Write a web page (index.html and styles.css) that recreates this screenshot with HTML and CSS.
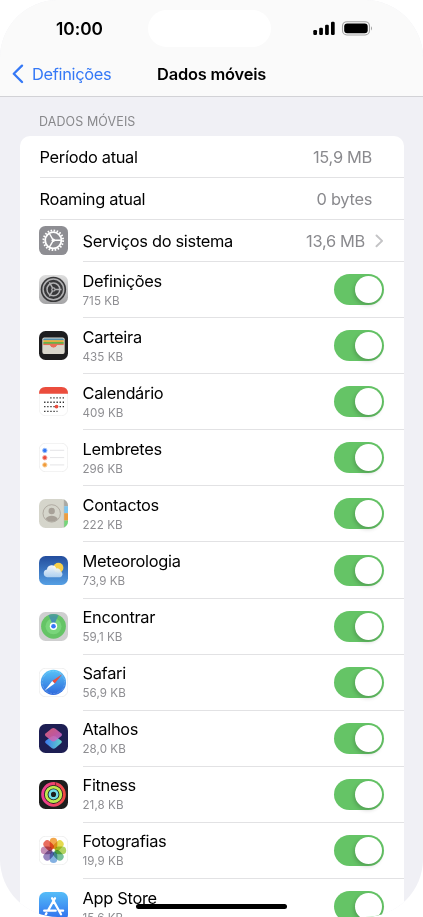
FILE: index.html
```html
<!DOCTYPE html>
<html lang="pt">
<head>
<meta charset="utf-8">
<title>Dados móveis</title>
<link rel="stylesheet" href="styles.css">
</head>
<body>
<div class="screen">
  <header class="header">
    <div class="status">
      <span class="time">10:00</span>
      <span class="island"></span>
      <svg class="indicators" width="61" height="16" viewBox="0 0 61 16">
        <rect x="0.3" y="9" width="3.7" height="5" rx="1.2"/><rect x="6.2" y="6.7" width="3.7" height="7.3" rx="1.2"/><rect x="12.1" y="3.7" width="3.7" height="10.3" rx="1.2"/><rect x="18" y="0.7" width="3.7" height="13.3" rx="1.2"/>
        <rect x="29.5" y="0.7" width="27" height="13.3" rx="4.4" fill="none" stroke="#a5a5a5" stroke-width="1.1"/>
        <rect x="31.2" y="2.4" width="23.5" height="9.9" rx="3"/>
        <path d="M58 5.2Q60 7.3 58 9.5Z" fill="#a0a0a0"/>
      </svg>
    </div>
    <nav class="nav">
      <a class="back"><svg width="12" height="20" viewBox="0 0 12 20"><path d="M10 1.6 1.8 9.8 10 18" fill="none" stroke="#3478f6" stroke-width="2.3" stroke-linecap="round" stroke-linejoin="round"/></svg><span>Definições</span></a>
      <h1>Dados móveis</h1>
    </nav>
  </header>
  <h2>DADOS MÓVEIS</h2>
  <main class="card">
    <div class="row plain"><span class="name">Período atual</span><span class="value">15,9 MB</span></div>
    <div class="row plain"><span class="name">Roaming atual</span><span class="value">0 bytes</span></div>
    <div class="row system">
      <svg class="icon" viewBox="0 0 29 29"><rect width="29" height="29" rx="6.3" fill="#8e8e93"/><g fill="none" stroke="#fff"><circle cx="14.3" cy="14.3" r="9.8" stroke-width="2" stroke-dasharray="1.6 1.479"/><circle cx="14.3" cy="14.3" r="8.1" stroke-width="1.8"/><path d="M14.3 14.3h7.5M14.3 14.3 10.4 7.5M14.3 14.3 10.4 21.1" stroke-width="1.4"/></g><circle cx="14.3" cy="14.3" r="1.7" fill="#fff"/></svg>
      <div class="line"><span class="name">Serviços do sistema</span><span class="value">13,6 MB</span><svg class="chevron" width="9" height="14" viewBox="0 0 9 14"><path d="m1.5 1.5 5.6 5.4-5.6 5.4" fill="none" stroke="#c4c4c6" stroke-width="2" stroke-linecap="round" stroke-linejoin="round"/></svg></div>
    </div>
    <div class="row app">
      <svg class="icon" viewBox="0 0 29 29"><defs><linearGradient id="silver" x2="0" y2="1"><stop stop-color="#dedede"/><stop offset="1" stop-color="#a4a4a6"/></linearGradient></defs><rect width="29" height="29" rx="6.5" fill="url(#silver)"/><circle cx="14.4" cy="14.4" r="12.7" fill="#38383a"/><g fill="none" stroke="#b1b1b3"><circle cx="14.4" cy="14.4" r="10.3" stroke-width="1.5"/><circle cx="14.4" cy="14.4" r="6.4" stroke-width="1.5"/><path d="M14.4 14.4h8.1M14.4 14.4 10.4 7.4M14.4 14.4 10.4 21.4" stroke-width="1.5"/></g><circle cx="14.4" cy="14.4" r="2.2" fill="#b1b1b3"/><circle cx="14.4" cy="14.4" r="1" fill="#38383a"/></svg>
      <div class="line"><div class="info"><span class="name">Definições</span><small>715 KB</small></div><span class="toggle"></span></div>
    </div>
    <div class="row app">
      <svg class="icon" viewBox="0 0 29 29"><rect width="29" height="29" rx="6.5" fill="#1d1d1f"/><rect x="3.3" y="6.6" width="22.4" height="16.3" rx="2" fill="#d9d6cc"/><path d="M4.3 8.4q0-1 1-1h18.4q1 0 1 1v1H4.3z" fill="#528fad"/><path d="M4.3 9.2h20.4v2H4.3z" fill="#e5ae3e"/><path d="M4.3 11h20.4v2H4.3z" fill="#65b348"/><path d="M4.3 12.8h20.4v1.4h-6.5q-1.2 2.7-3.7 2.7t-3.7-2.7H4.3z" fill="#e96e57"/><path d="M4 14.2h6.8q1.2 2.5 3.7 2.5t3.7-2.5H25v7.2q0 1-1 1H5q-1 0-1-1z" fill="#d9d6cc"/></svg>
      <div class="line"><div class="info"><span class="name">Carteira</span><small>435 KB</small></div><span class="toggle"></span></div>
    </div>
    <div class="row app">
      <svg class="icon" viewBox="0 0 29 29"><rect x=".25" y=".25" width="28.5" height="28.5" rx="6.3" fill="#fff" stroke="#e5e5e5" stroke-width=".5"/><path d="M0 6.8Q0 0 6.5 0h16Q29 0 29 6.8z" fill="#eb4d3d"/><g stroke="#303030" stroke-width="1.35" stroke-dasharray="1.35 1.75"><path d="M11.2 10.9H25M5.1 15.2H25M5.1 19.6H25M5.1 24.3H18.5"/></g><circle cx="17.5" cy="19.6" r="1.9" fill="#eb4d3d"/></svg>
      <div class="line"><div class="info"><span class="name">Calendário</span><small>409 KB</small></div><span class="toggle"></span></div>
    </div>
    <div class="row app">
      <svg class="icon" viewBox="0 0 29 29"><rect x=".25" y=".25" width="28.5" height="28.5" rx="6.3" fill="#fff" stroke="#dedede" stroke-width=".5"/><path d="M11 7.3h14.2M11 14.6h14.2M11 21.9h14.2" stroke="#dddde0" stroke-width=".8"/><g stroke-width="1"><circle cx="5.8" cy="7.5" r="2.2" fill="#3478f6" stroke="#9cc0fa"/><circle cx="5.8" cy="14.7" r="2.2" fill="#eb4d3d" stroke="#f6aaa3"/><circle cx="5.8" cy="21.9" r="2.2" fill="#f19a37" stroke="#f9d09d"/></g></svg>
      <div class="line"><div class="info"><span class="name">Lembretes</span><small>296 KB</small></div><span class="toggle"></span></div>
    </div>
    <div class="row app">
      <svg class="icon" viewBox="0 0 29 29"><defs><clipPath id="tile"><rect width="29" height="29" rx="6.5"/></clipPath></defs><g clip-path="url(#tile)"><path d="M0 0h29v29H0z" fill="#d5d5cb"/><path d="M25 0h4v7.3h-4z" fill="#aaa9a3"/><path d="M25 7.3h4v7h-4z" fill="#7cc5f0"/><path d="M25 14.3h4v7.2h-4z" fill="#ed9d3f"/><path d="M25 21.5h4V29h-4z" fill="#75d67a"/><path d="M25 0v29" stroke="#b8b8b0" stroke-width=".5"/></g><circle cx="12.7" cy="14.4" r="8.7" fill="#d5d5cb" stroke="#a7a198" stroke-width=".8"/><circle cx="12.7" cy="12" r="3.2" fill="#a7a198"/><path d="M6.5 20q2.2-3.2 6.2-3.2t6.2 3.2q-2.6 2.8-6.2 2.8T6.5 20z" fill="#a7a198"/></svg>
      <div class="line"><div class="info"><span class="name">Contactos</span><small>222 KB</small></div><span class="toggle"></span></div>
    </div>
    <div class="row app">
      <svg class="icon" viewBox="0 0 29 29"><defs><linearGradient id="sky" x2="0" y2="1"><stop stop-color="#234d9d"/><stop offset="1" stop-color="#559fe4"/></linearGradient><linearGradient id="cloud" x2="0" y2="1"><stop stop-color="#fff"/><stop offset="1" stop-color="#b5d4f1"/></linearGradient></defs><rect width="29" height="29" rx="6.5" fill="url(#sky)"/><circle cx="19.4" cy="11.8" r="5" fill="#f8cf48"/><path d="M8.2 21.2a3.9 3.9 0 0 1-.3-7.7 4.9 4.9 0 0 1 9.4-1.1 3.8 3.8 0 0 1 4.5 3.2 3 3 0 0 1-.5 5.6z" fill="url(#cloud)" opacity=".94"/></svg>
      <div class="line"><div class="info"><span class="name">Meteorologia</span><small>73,9 KB</small></div><span class="toggle"></span></div>
    </div>
    <div class="row app">
      <svg class="icon" viewBox="0 0 29 29"><defs><linearGradient id="beam" x2="0" y2="1"><stop stop-color="#4595a5" stop-opacity=".7"/><stop offset="1" stop-color="#3478c6"/></linearGradient></defs><rect width="29" height="29" rx="6.5" fill="#cfcfd0"/><circle cx="14.5" cy="14.3" r="12.4" fill="#65c466"/><circle cx="14.5" cy="14.3" r="8" fill="#79d57b"/><path d="M14.5 14.3 9.4 3.1Q14.5.8 19.6 3.1z" fill="url(#beam)"/><circle cx="14.5" cy="14.3" r="3.7" fill="#fff"/><circle cx="14.5" cy="14.3" r="2.3" fill="#3478f6"/></svg>
      <div class="line"><div class="info"><span class="name">Encontrar</span><small>59,1 KB</small></div><span class="toggle"></span></div>
    </div>
    <div class="row app">
      <svg class="icon" viewBox="0 0 29 29"><defs><linearGradient id="compass" x2="0" y2="1"><stop stop-color="#58c4f7"/><stop offset="1" stop-color="#2d67dc"/></linearGradient></defs><rect x=".25" y=".25" width="28.5" height="28.5" rx="6.3" fill="#fff" stroke="#dedede" stroke-width=".5"/><circle cx="14.4" cy="14.4" r="12.6" fill="url(#compass)"/><circle cx="14.4" cy="14.4" r="11.2" fill="none" stroke="#d5eaff" stroke-opacity=".5" stroke-width="1.2" stroke-dasharray=".4 1.06"/><path d="M23.2 6.2 13.2 13 15.7 15.6z" fill="#eb4d3d"/><path d="M5.6 22.7 13.2 13 15.7 15.6z" fill="#fff"/></svg>
      <div class="line"><div class="info"><span class="name">Safari</span><small>56,9 KB</small></div><span class="toggle"></span></div>
    </div>
    <div class="row app">
      <svg class="icon" viewBox="0 0 29 29"><defs><linearGradient id="pink" x2="1" y2="1"><stop stop-color="#e76577"/><stop offset=".5" stop-color="#d65fa5"/><stop offset="1" stop-color="#b66dde"/></linearGradient><linearGradient id="blue"><stop stop-color="#3d79ee"/><stop offset="1" stop-color="#62d5c9"/></linearGradient></defs><rect width="29" height="29" rx="6.5" fill="#1d1e53"/><path d="M6.5 18.9q-1-1.1.2-2.1l5.8-4.2q2-1.4 4 0l5.8 4.2q1.2 1 0 2.1l-5.8 5q-1.9 1.5-3.8 0z" fill="url(#blue)"/><path d="M6.5 12.1q-1.3-1.3 0-2.5l5.9-4.8q2-1.4 4 0l6 4.8q1.3 1.2 0 2.5l-6 4.6q-2 1.5-4 0z" fill="url(#pink)" opacity=".88"/></svg>
      <div class="line"><div class="info"><span class="name">Atalhos</span><small>28,0 KB</small></div><span class="toggle"></span></div>
    </div>
    <div class="row app">
      <svg class="icon" viewBox="0 0 29 29"><defs><linearGradient id="move" x2="1"><stop stop-color="#ed3d96"/><stop offset="1" stop-color="#f14b42"/></linearGradient></defs><rect width="29" height="29" rx="6.5" fill="#1d1d1d"/><g fill="none" stroke-width="2.8"><circle cx="14.5" cy="14.4" r="10.9" stroke="url(#move)"/><circle cx="14.5" cy="14.4" r="7.3" stroke="#bde84d"/><circle cx="14.5" cy="14.4" r="3.8" stroke="#72dce7" stroke-width="2.5"/></g><path d="M16.6 2.4v3.1" stroke="#6b1b25" stroke-width=".8"/></svg>
      <div class="line"><div class="info"><span class="name">Fitness</span><small>21,8 KB</small></div><span class="toggle"></span></div>
    </div>
    <div class="row app">
      <svg class="icon" viewBox="0 0 29 29"><rect x=".25" y=".25" width="28.5" height="28.5" rx="6.3" fill="#fff" stroke="#dedede" stroke-width=".5"/><g class="petals"><rect x="10.7" y="1.7" width="7.6" height="11.4" rx="3.8" fill="#f19d38"/><rect x="10.7" y="1.7" width="7.6" height="11.4" rx="3.8" fill="#e3d63b" transform="rotate(45 14.5 14.4)"/><rect x="10.7" y="1.7" width="7.6" height="11.4" rx="3.8" fill="#a9cf50" transform="rotate(90 14.5 14.4)"/><rect x="10.7" y="1.7" width="7.6" height="11.4" rx="3.8" fill="#67b990" transform="rotate(135 14.5 14.4)"/><rect x="10.7" y="1.7" width="7.6" height="11.4" rx="3.8" fill="#77a9df" transform="rotate(180 14.5 14.4)"/><rect x="10.7" y="1.7" width="7.6" height="11.4" rx="3.8" fill="#8d79b8" transform="rotate(225 14.5 14.4)"/><rect x="10.7" y="1.7" width="7.6" height="11.4" rx="3.8" fill="#bd82ad" transform="rotate(270 14.5 14.4)"/><rect x="10.7" y="1.7" width="7.6" height="11.4" rx="3.8" fill="#e65d4c" transform="rotate(315 14.5 14.4)"/></g></svg>
      <div class="line"><div class="info"><span class="name">Fotografias</span><small>19,9 KB</small></div><span class="toggle"></span></div>
    </div>
    <div class="row app">
      <svg class="icon" viewBox="0 0 29 29"><defs><linearGradient id="store" x2="0" y2="1"><stop stop-color="#55bdf8"/><stop offset="1" stop-color="#2d6bed"/></linearGradient></defs><rect width="29" height="29" rx="6.5" fill="url(#store)"/><path d="m13.1 6.3 8.9 16M16 6.3 9 18.6M5.2 18.7h11.5M20.5 18.7h3.6M7.5 21.2l-.7 1.2" fill="none" stroke="#fff" stroke-width="2.3" stroke-linecap="round"/></svg>
      <div class="line"><div class="info"><span class="name">App Store</span><small>15,6 KB</small></div><span class="toggle"></span></div>
    </div>
  </main>
  <div class="home"></div>
</div>
</body>
</html>
```
FILE: styles.css
```css
* { box-sizing: border-box; }
body { margin: 0; background: #fff; }
.screen {
  position: relative;
  width: 423px;
  height: 917px;
  overflow: hidden;
  border-radius: 58px;
  background: #f0f0f5;
  color: #000;
  font-family: Inter, "Liberation Sans", sans-serif;
  font-size: 16.4px;
}
.header { height: 97px; background: #fafafa; border-bottom: 1px solid #d2d2d6; }
.status { display: grid; grid-template-columns: 148px 123px 1fr; height: 54px; padding-top: 10px; }
.time { padding: 8px 0 0 56px; font-weight: 600; font-size: 17.3px; line-height: 22px; letter-spacing: -.02px; }
.island { height: 37px; border-radius: 19px; background: #fff; }
.indicators { margin: 11px 0 0 42px; }
.nav { display: grid; grid-template-columns: 157px 1fr; align-items: center; height: 40px; }
.back { display: flex; align-items: center; gap: 8px; padding-left: 12px; color: #3478f6; letter-spacing: -.3px; }
h1 { margin: 0; font-size: 16.4px; font-weight: 600; letter-spacing: -.18px; }
h2 { margin: 16px 0 6px 39px; font-size: 12.5px; font-weight: 400; line-height: 17px; letter-spacing: .1px; color: #88888b; }
.card { width: 383.5px; margin-left: 20px; background: #fff; border-radius: 10px 10px 0 0; }
.row { display: flex; padding-left: 19.5px; }
.plain { height: 42px; align-items: center; position: relative; padding-right: 31.5px; }
.plain::after { content: ""; position: absolute; left: 20px; right: 0; bottom: 0; height: 1px; background: #e2e2e4; }
.icon { width: 29px; height: 29px; flex: none; align-self: center; margin: -1px 14.5px 0 -.5px; }
.line { display: flex; flex: 1; align-items: center; border-bottom: 1px solid #e2e2e4; padding-right: 19.5px; }
.system { height: 42px; }
.system .name { padding-top: 1px; }
.app { height: 56.1px; }
.name { letter-spacing: -.3px; line-height: 21px; white-space: nowrap; }
.value { margin-left: auto; color: #8a8a8e; letter-spacing: -.3px; }
.chevron { margin-left: 10px; }
.info { display: flex; flex-direction: column; }
small { font-size: 11.6px; line-height: 16px; color: #8e8e92; letter-spacing: .05px; margin-top: 1px; }
.toggle { display: flex; justify-content: flex-end; width: 50.5px; height: 31px; margin-left: auto; padding: 2px; border-radius: 16px; background: #65c466; }
.toggle::after { content: ""; width: 27px; height: 27px; border-radius: 50%; background: #fff; box-shadow: -1px 2px 4px #0003; }
.petals rect { mix-blend-mode: multiply; opacity: .9; }
.home { position: absolute; left: 136px; top: 904px; width: 151px; height: 5px; border-radius: 3px; background: #000; }
```
